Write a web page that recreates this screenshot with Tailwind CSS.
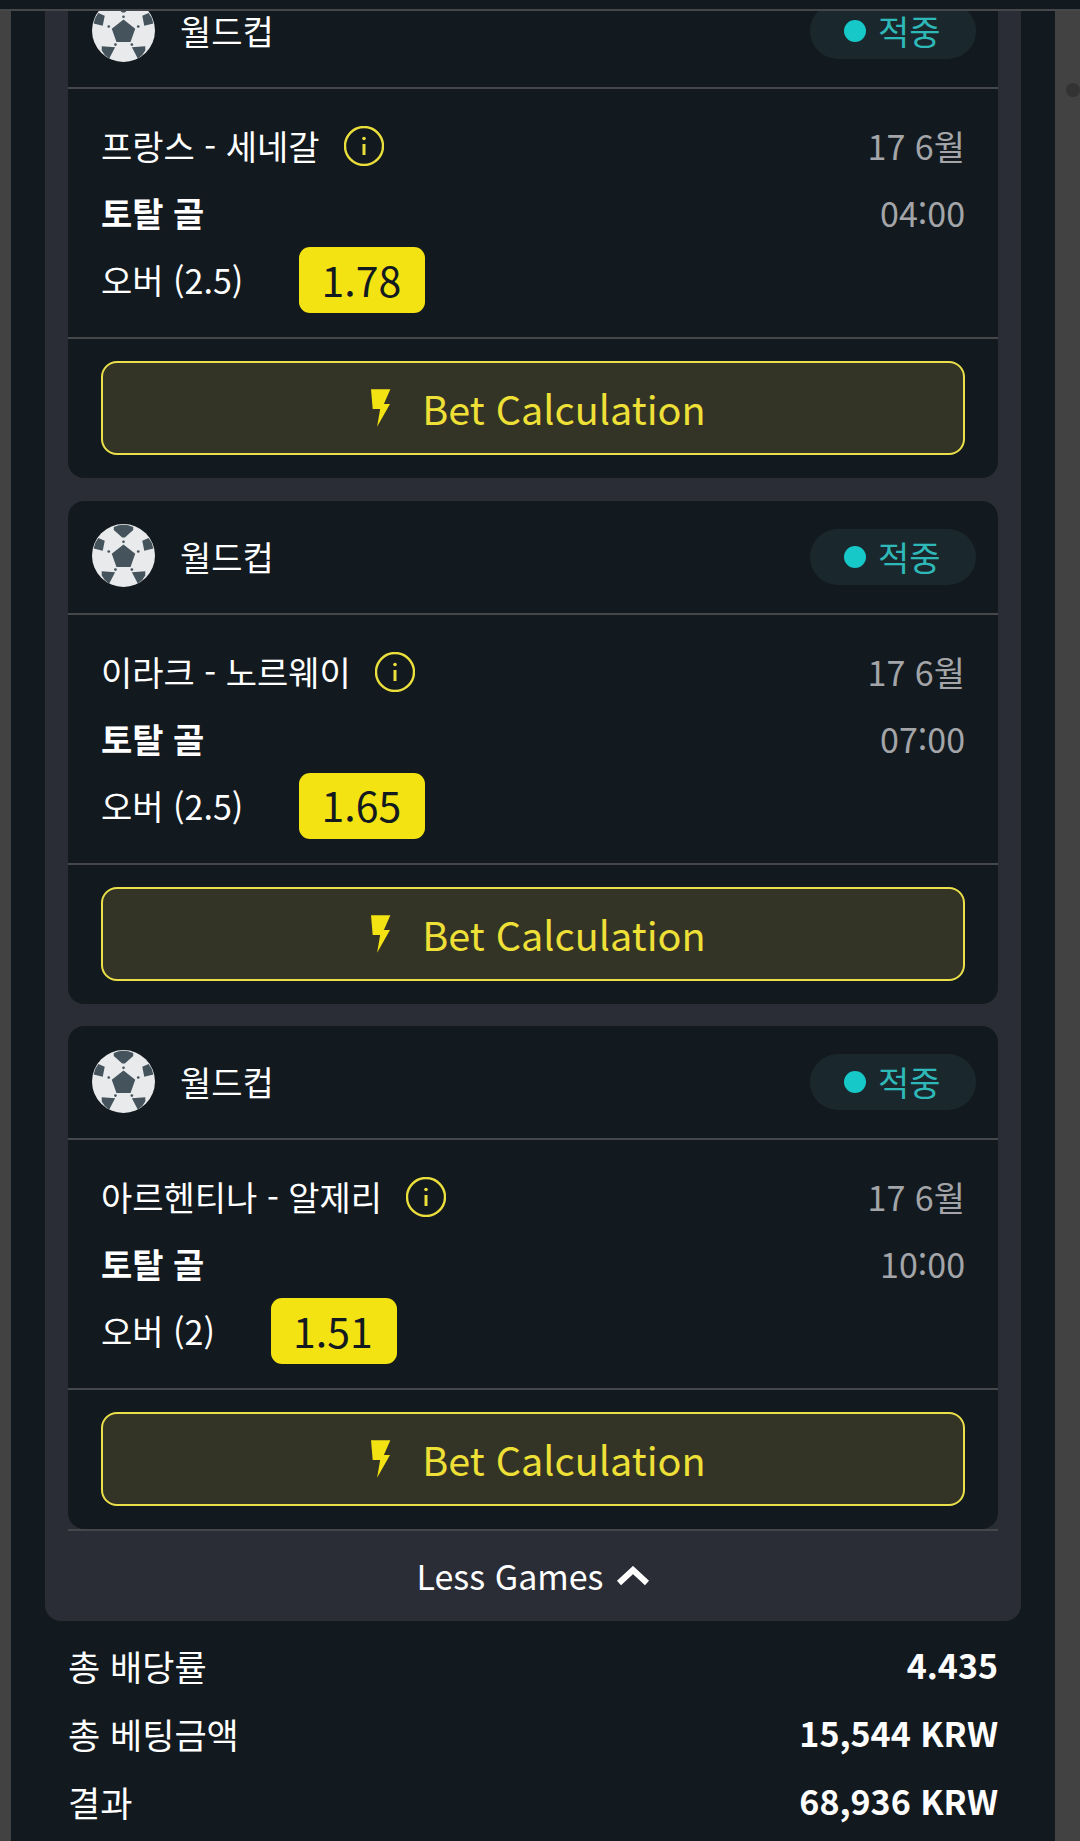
<!DOCTYPE html>
<html lang="ko">
<head>
<meta charset="utf-8">
<script src="https://cdn.jsdelivr.net/npm/@tailwindcss/browser@4"></script>
</head>
<body class="m-0 bg-[#131a1f] font-['Noto_Sans_CJK_KR','Noto_Sans',sans-serif]">
<div class="w-[1080px] h-[1841px] overflow-hidden flex flex-col bg-[#131a1f] text-white">
  <div class="h-[11px] shrink-0 border-b-2 border-[#45474a] bg-[#131a1f]"></div>
  <div class="flex flex-1 min-h-0">
    <div class="w-[11px] shrink-0 bg-[#424242]"></div>
    <main class="w-[1044px] shrink-0 overflow-hidden px-[34px]">
      <section class="mt-[-36px] bg-[#2a2d35] rounded-b-[16px] px-[23px] flex flex-col">
        <div class="flex flex-col gap-[22.5px]">

          <article class="bg-[#131a1f] rounded-[16px] flex flex-col">
            <header class="h-[114px] border-b-2 border-[#45474a] flex items-center justify-between pl-[24px] pr-[22px]">
              <div class="flex items-center gap-[25px]">
                <svg class="w-[63px] h-[63px] mt-[-2px]" viewBox="38 42 188 188"><circle cx="132" cy="136" r="94" fill="#e8eaeb"/><path fill="#44535c" d="M132 103L167 131L153 170L111 170L97 131ZM103 51Q132 37 161 51L161 60L136 82L128 82L103 60ZM57 84L76 92L70 122L43 115Q46 97 57 84ZM207 84L188 92L194 122L221 115Q218 97 207 84ZM67 183L107 186L89 220Q75 212 67 196ZM197 183L157 186L175 220Q189 212 197 196Z"/><g fill="#44535c"><circle cx="132" cy="95" r="4"/><circle cx="88" cy="124" r="4"/><circle cx="176" cy="124" r="4"/><circle cx="108" cy="178" r="4"/><circle cx="157" cy="178" r="4"/></g></svg>
                <span class="text-[34px] leading-none">월드컵</span>
              </div>
              <div class="w-[166px] h-[56px] rounded-full bg-[#1a282e] flex items-center pl-[34px] gap-[12px]">
                <span class="w-[22px] h-[22px] rounded-full bg-[#17c8c8]"></span>
                <span class="text-[34px] leading-none text-[#2fb8b8]">적중</span>
              </div>
            </header>
            <div class="h-[248px] px-[33px] pt-[24px] flex flex-col">
              <div class="flex justify-between items-center h-[66px]">
                <div class="flex items-center gap-[24px]">
                  <span class="text-[34px] leading-none">프랑스 - 세네갈</span>
                  <svg class="w-[40px] h-[40px]" viewBox="0 0 40 40" fill="none"><circle cx="20" cy="20" r="19" stroke="#ebdf3c" stroke-width="2.4"/><circle cx="20" cy="12.5" r="1.8" fill="#ebdf3c"/><path d="M20 18V29" stroke="#ebdf3c" stroke-width="3"/></svg>
                </div>
                <span class="text-[34px] leading-none text-[#a3a5a9]">17 6월</span>
              </div>
              <div class="flex justify-between items-center h-[68px]">
                <span class="text-[34px] leading-none font-bold">토탈 골</span>
                <span class="text-[34px] leading-none text-[#a3a5a9]">04:00</span>
              </div>
              <div class="flex items-center h-[66px] gap-[56px]">
                <span class="text-[34px] leading-none">오버 (2.5)</span>
                <span class="w-[126px] h-[66px] rounded-[11px] bg-[#f3e313] text-[#131a1f] text-[41px] leading-none flex items-center justify-center pr-[2px] pb-[2px]">1.78</span>
              </div>
            </div>
            <div class="border-t-2 border-[#45474a] px-[33px] pt-[22px] pb-[23px]">
              <button class="w-full h-[94px] rounded-[16px] border-2 border-[#ebe04a] bg-[#333326] text-[#eee036] flex items-center justify-center gap-[31px] pl-[10px]">
                <svg class="w-[21px] h-[38px]" viewBox="97 59 58 112"><path fill="#f3e313" d="M98 60H155L136 103H154L116 170L125 118H103Z"/></svg>
                <span class="text-[39.6px] leading-none">Bet Calculation</span>
              </button>
            </div>
          </article>

          <article class="bg-[#131a1f] rounded-[16px] flex flex-col">
            <header class="h-[114px] border-b-2 border-[#45474a] flex items-center justify-between pl-[24px] pr-[22px]">
              <div class="flex items-center gap-[25px]">
                <svg class="w-[63px] h-[63px] mt-[-2px]" viewBox="38 42 188 188"><circle cx="132" cy="136" r="94" fill="#e8eaeb"/><path fill="#44535c" d="M132 103L167 131L153 170L111 170L97 131ZM103 51Q132 37 161 51L161 60L136 82L128 82L103 60ZM57 84L76 92L70 122L43 115Q46 97 57 84ZM207 84L188 92L194 122L221 115Q218 97 207 84ZM67 183L107 186L89 220Q75 212 67 196ZM197 183L157 186L175 220Q189 212 197 196Z"/><g fill="#44535c"><circle cx="132" cy="95" r="4"/><circle cx="88" cy="124" r="4"/><circle cx="176" cy="124" r="4"/><circle cx="108" cy="178" r="4"/><circle cx="157" cy="178" r="4"/></g></svg>
                <span class="text-[34px] leading-none">월드컵</span>
              </div>
              <div class="w-[166px] h-[56px] rounded-full bg-[#1a282e] flex items-center pl-[34px] gap-[12px]">
                <span class="w-[22px] h-[22px] rounded-full bg-[#17c8c8]"></span>
                <span class="text-[34px] leading-none text-[#2fb8b8]">적중</span>
              </div>
            </header>
            <div class="h-[248px] px-[33px] pt-[24px] flex flex-col">
              <div class="flex justify-between items-center h-[66px]">
                <div class="flex items-center gap-[24px]">
                  <span class="text-[34px] leading-none">이라크 - 노르웨이</span>
                  <svg class="w-[40px] h-[40px]" viewBox="0 0 40 40" fill="none"><circle cx="20" cy="20" r="19" stroke="#ebdf3c" stroke-width="2.4"/><circle cx="20" cy="12.5" r="1.8" fill="#ebdf3c"/><path d="M20 18V29" stroke="#ebdf3c" stroke-width="3"/></svg>
                </div>
                <span class="text-[34px] leading-none text-[#a3a5a9]">17 6월</span>
              </div>
              <div class="flex justify-between items-center h-[68px]">
                <span class="text-[34px] leading-none font-bold">토탈 골</span>
                <span class="text-[34px] leading-none text-[#a3a5a9]">07:00</span>
              </div>
              <div class="flex items-center h-[66px] gap-[56px]">
                <span class="text-[34px] leading-none">오버 (2.5)</span>
                <span class="w-[126px] h-[66px] rounded-[11px] bg-[#f3e313] text-[#131a1f] text-[41px] leading-none flex items-center justify-center pr-[2px] pb-[2px]">1.65</span>
              </div>
            </div>
            <div class="border-t-2 border-[#45474a] px-[33px] pt-[22px] pb-[23px]">
              <button class="w-full h-[94px] rounded-[16px] border-2 border-[#ebe04a] bg-[#333326] text-[#eee036] flex items-center justify-center gap-[31px] pl-[10px]">
                <svg class="w-[21px] h-[38px]" viewBox="97 59 58 112"><path fill="#f3e313" d="M98 60H155L136 103H154L116 170L125 118H103Z"/></svg>
                <span class="text-[39.6px] leading-none">Bet Calculation</span>
              </button>
            </div>
          </article>

          <article class="bg-[#131a1f] rounded-[16px] flex flex-col">
            <header class="h-[114px] border-b-2 border-[#45474a] flex items-center justify-between pl-[24px] pr-[22px]">
              <div class="flex items-center gap-[25px]">
                <svg class="w-[63px] h-[63px] mt-[-2px]" viewBox="38 42 188 188"><circle cx="132" cy="136" r="94" fill="#e8eaeb"/><path fill="#44535c" d="M132 103L167 131L153 170L111 170L97 131ZM103 51Q132 37 161 51L161 60L136 82L128 82L103 60ZM57 84L76 92L70 122L43 115Q46 97 57 84ZM207 84L188 92L194 122L221 115Q218 97 207 84ZM67 183L107 186L89 220Q75 212 67 196ZM197 183L157 186L175 220Q189 212 197 196Z"/><g fill="#44535c"><circle cx="132" cy="95" r="4"/><circle cx="88" cy="124" r="4"/><circle cx="176" cy="124" r="4"/><circle cx="108" cy="178" r="4"/><circle cx="157" cy="178" r="4"/></g></svg>
                <span class="text-[34px] leading-none">월드컵</span>
              </div>
              <div class="w-[166px] h-[56px] rounded-full bg-[#1a282e] flex items-center pl-[34px] gap-[12px]">
                <span class="w-[22px] h-[22px] rounded-full bg-[#17c8c8]"></span>
                <span class="text-[34px] leading-none text-[#2fb8b8]">적중</span>
              </div>
            </header>
            <div class="h-[248px] px-[33px] pt-[24px] flex flex-col">
              <div class="flex justify-between items-center h-[66px]">
                <div class="flex items-center gap-[24px]">
                  <span class="text-[34px] leading-none">아르헨티나 - 알제리</span>
                  <svg class="w-[40px] h-[40px]" viewBox="0 0 40 40" fill="none"><circle cx="20" cy="20" r="19" stroke="#ebdf3c" stroke-width="2.4"/><circle cx="20" cy="12.5" r="1.8" fill="#ebdf3c"/><path d="M20 18V29" stroke="#ebdf3c" stroke-width="3"/></svg>
                </div>
                <span class="text-[34px] leading-none text-[#a3a5a9]">17 6월</span>
              </div>
              <div class="flex justify-between items-center h-[68px]">
                <span class="text-[34px] leading-none font-bold">토탈 골</span>
                <span class="text-[34px] leading-none text-[#a3a5a9]">10:00</span>
              </div>
              <div class="flex items-center h-[66px] gap-[56px]">
                <span class="text-[34px] leading-none">오버 (2)</span>
                <span class="w-[126px] h-[66px] rounded-[11px] bg-[#f3e313] text-[#131a1f] text-[41px] leading-none flex items-center justify-center pr-[2px] pb-[2px]">1.51</span>
              </div>
            </div>
            <div class="border-t-2 border-[#45474a] px-[33px] pt-[22px] pb-[23px]">
              <button class="w-full h-[94px] rounded-[16px] border-2 border-[#ebe04a] bg-[#333326] text-[#eee036] flex items-center justify-center gap-[31px] pl-[10px]">
                <svg class="w-[21px] h-[38px]" viewBox="97 59 58 112"><path fill="#f3e313" d="M98 60H155L136 103H154L116 170L125 118H103Z"/></svg>
                <span class="text-[39.6px] leading-none">Bet Calculation</span>
              </button>
            </div>
          </article>
        </div>
        <div class="h-[92px] border-t-2 border-[#45474a] flex items-center justify-center gap-[12px]">
          <span class="text-[34px] leading-none">Less Games</span>
          <svg class="w-[34px] h-[20px]" viewBox="0 0 34 20" fill="none"><path d="M3 17L17 4L31 17" stroke="#fff" stroke-width="6"/></svg>
        </div>
      </section>
      <div class="px-[23px] pt-[10px] flex flex-col">
        <div class="h-[68px] flex items-center justify-between text-[35px] leading-none"><span>총 배당률</span><span class="font-bold text-[34px]">4.435</span></div>
        <div class="h-[68px] flex items-center justify-between text-[35px] leading-none"><span>총 베팅금액</span><span class="font-bold text-[34px]">15,544 KRW</span></div>
        <div class="h-[68px] flex items-center justify-between text-[35px] leading-none"><span>결과</span><span class="font-bold text-[34px]">68,936 KRW</span></div>
      </div>
    </main>
    <div class="relative flex-1 bg-[#424242]">
      <span class="absolute left-[11px] top-[72px] w-[14px] h-[14px] rounded-full bg-[#333333]"></span>
    </div>
  </div>
</div>
</body>
</html>
